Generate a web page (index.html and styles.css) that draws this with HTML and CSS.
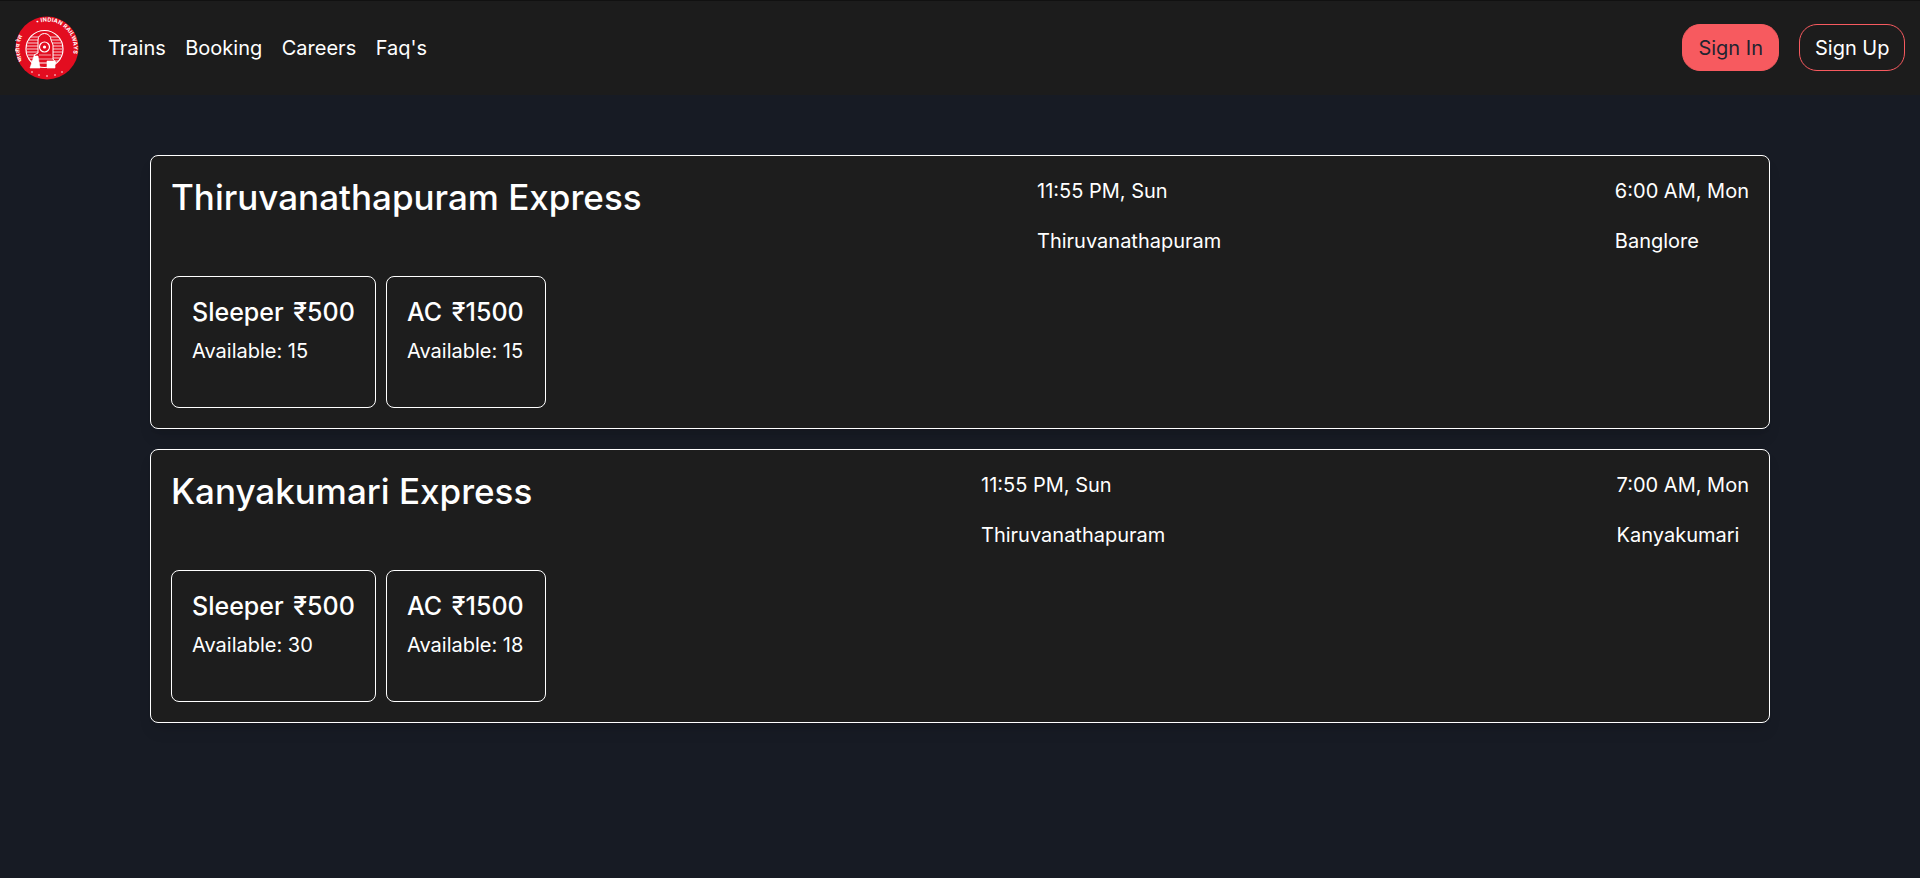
FILE: index.html
```html
<!DOCTYPE html>
<html lang="en">
<head>
<meta charset="utf-8">
<title>Trains</title>
<link rel="stylesheet" href="styles.css">
</head>
<body>
<header class="navbar">
  <div class="nav-left">
    <svg class="logo" viewBox="0 0 64 64" aria-label="Indian Railways">
      <defs>
        <path id="arcR" d="M 21 8 A 26.500 26.500 0 1 1 33 58.500"/>
        <path id="arcL" d="M 14 53 A 27 27 0 0 1 26 6"/>
      </defs>
      <circle cx="32" cy="32" r="31.500" fill="#e30d20"/>
      <text class="logo-text"><textPath href="#arcR" startOffset="1">• INDIAN RAILWAYS</textPath></text>
      <text class="logo-text"><textPath href="#arcL" startOffset="10">भारतीय रेल</textPath></text>
      <circle cx="29.500" cy="33" r="18.500" fill="none" stroke="#fff" stroke-width="1.200"/>
      <g stroke="#fff" stroke-width=".8">
        <path d="M16 21H43M14 24H45M13 27H46M12 30H47M12 33H47M12 36H47M13 39H46M14 42H45M16 45H43"/>
      </g>
      <path d="M23 24a6.500 6.500 0 0 1 13 0l2 5v14l3 4H20l1-5-2-3 4-2v-9z" fill="#e30d20" stroke="#fff" stroke-width="1"/>
      <circle cx="29.500" cy="31" r="5" fill="#e30d20" stroke="#fff" stroke-width="1.200"/>
      <circle cx="29.500" cy="31" r="1.600" fill="#fff"/>
      <path d="M15 52l4-12h4l2 12zM24 39h12M23 43h15M32 52v-7h8v7z" fill="#fff" stroke="#fff" stroke-width=".6"/>
      <g fill="#fff"><circle cx="17" cy="56" r=".8"/><circle cx="24" cy="59" r=".8"/><circle cx="32" cy="60" r=".8"/><circle cx="40" cy="59" r=".8"/><circle cx="47" cy="56" r=".8"/></g>
    </svg>
    <nav class="nav-links">
      <a href="#">Trains</a>
      <a href="#">Booking</a>
      <a href="#">Careers</a>
      <a href="#">Faq's</a>
    </nav>
  </div>
  <div class="nav-right">
    <button class="btn btn-solid">Sign In</button>
    <button class="btn btn-outline">Sign Up</button>
  </div>
</header>
<main class="list">
  <article class="card">
    <div class="card-top">
      <h2 class="train-name">Thiruvanathapuram Express</h2>
      <div class="route">
        <div class="stop"><p>11:55 PM, Sun</p><p>Thiruvanathapuram</p></div>
        <div class="stop"><p>6:00 AM, Mon</p><p>Banglore</p></div>
      </div>
    </div>
    <div class="seats">
      <div class="seat seat-sleeper"><h3>Sleeper ₹500</h3><p>Available: 15</p></div>
      <div class="seat seat-ac"><h3>AC ₹1500</h3><p>Available: 15</p></div>
    </div>
  </article>
  <article class="card">
    <div class="card-top">
      <h2 class="train-name">Kanyakumari Express</h2>
      <div class="route route-wide">
        <div class="stop"><p>11:55 PM, Sun</p><p>Thiruvanathapuram</p></div>
        <div class="stop"><p>7:00 AM, Mon</p><p>Kanyakumari</p></div>
      </div>
    </div>
    <div class="seats">
      <div class="seat seat-sleeper"><h3>Sleeper ₹500</h3><p>Available: 30</p></div>
      <div class="seat seat-ac"><h3>AC ₹1500</h3><p>Available: 18</p></div>
    </div>
  </article>
</main>
</body>
</html>
```
FILE: styles.css
```css
* { box-sizing: border-box; }
html, body { margin: 0; padding: 0; }
body {
  min-height: 878px;
  background: #171b24;
  color: #fff;
  font-family: Inter, "Noto Sans", sans-serif;
  font-size: 20px;
  line-height: 28px;
}
p, h2, h3 { margin: 0; font-weight: 400; }
.navbar {
  height: 95px;
  display: flex;
  align-items: center;
  justify-content: space-between;
  padding: 0 15px;
  background: #1c1c1c;
  border-top: 1px solid #111;
}
.nav-left { display: flex; align-items: center; gap: 29px; }
.logo { width: 64px; height: 64px; display: block; }
.logo-text { font-family: Inter, "Noto Sans", sans-serif; font-size: 5.600px; font-weight: 700; letter-spacing: .2px; fill: #fff; }
.nav-links { display: flex; gap: 19.500px; }
.nav-links a { color: #fff; text-decoration: none; }
.nav-right { display: flex; align-items: center; gap: 20px; padding-bottom: 1px; }
.btn {
  font: inherit;
  height: 47px;
  border-radius: 18px;
  cursor: pointer;
}
.btn-solid { padding: 0 15.500px; background: #f75a5f; border: 1px solid #f75a5f; color: #1f2430; }
.btn-outline { padding: 0 14.500px; background: transparent; border: 1px solid #f75a5f; color: #fff; }
.list {
  margin: 60px 150px 0;
  display: flex;
  flex-direction: column;
  gap: 20px;
}
.card {
  height: 274px;
  padding: 20px;
  background: #1d1d1d;
  border: 1px solid #fff;
  border-radius: 8px;
  box-shadow: 0 10px 15px -3px rgba(0,0,0,.1), 0 4px 6px -4px rgba(0,0,0,.1);
}
.card-top { display: flex; justify-content: space-between; height: 100px; }
.train-name { font-size: 35px; line-height: 42px; font-weight: 500; }
.route { width: 712px; display: flex; justify-content: space-between; padding-top: 1px; }
.route-wide { width: 768px; }
.stop { display: flex; flex-direction: column; gap: 22px; min-width: 132px; }
.seats { display: flex; gap: 10px; }
.seat {
  height: 132px;
  padding: 20px;
  border: 1px solid #fff;
  border-radius: 8px;
  display: flex;
  flex-direction: column;
  gap: 9px;
}
.seat-sleeper { width: 205px; }
.seat-ac { width: 160px; }
.seat h3 { font-size: 25px; line-height: 31px; font-weight: 500; white-space: nowrap; word-spacing: 3px; }
```
